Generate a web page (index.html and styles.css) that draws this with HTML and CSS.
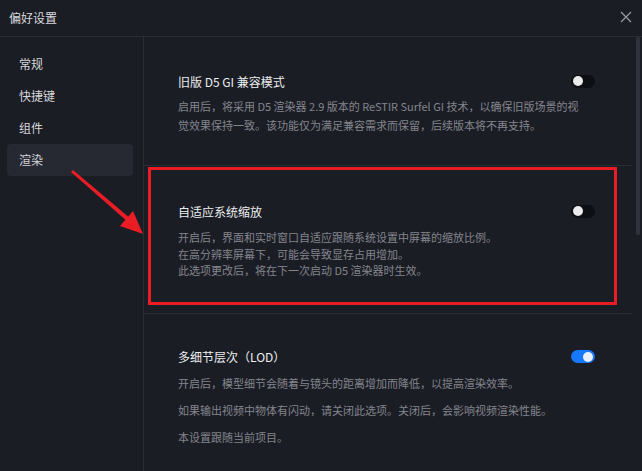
FILE: index.html
```html
<html>
<head>
  <meta charset="utf-8">
  <link rel="stylesheet" href="styles.css">
</head>
<body>
  <div class="dialog">
    <div class="header">
      <span class="header-title">偏好设置</span>
      <svg class="close" width="12" height="12" viewBox="0 0 12 12">
        <path d="M1 1 L11 11 M11 1 L1 11" stroke="#9a9ca3" stroke-width="1.2" fill="none"/>
      </svg>
    </div>

    <div class="body">
      <div class="sidebar">
        <div class="nav-item">常规</div>
        <div class="nav-item">快捷键</div>
        <div class="nav-item">组件</div>
        <div class="nav-item active">渲染</div>
      </div>

      <div class="content">
        <div class="sections">
          <div class="section first">
            <div class="row">
              <div class="title">旧版 D5 GI 兼容模式</div>
              <div class="toggle"><div class="knob"></div></div>
            </div>
            <div class="desc wide">启用后，将采用 D5 渲染器 2.9 版本的 ReSTIR Surfel GI 技术，以确保旧版场景的视觉效果保持一致。该功能仅为满足兼容需求而保留，后续版本将不再支持。</div>
          </div>

          <div class="section second">
            <div class="highlight"></div>
            <div class="row">
              <div class="title">自适应系统缩放</div>
              <div class="toggle"><div class="knob"></div></div>
            </div>
            <div class="desc">开启后，界面和实时窗口自适应跟随系统设置中屏幕的缩放比例。<br>在高分辨率屏幕下，可能会导致显存占用增加。<br>此选项更改后，将在下一次启动 D5 渲染器时生效。</div>
          </div>

          <div class="section third">
            <div class="row">
              <div class="title">多细节层次（LOD）</div>
              <div class="toggle on"><div class="knob"></div></div>
            </div>
            <p class="para">开启后，模型细节会随着与镜头的距离增加而降低，以提高渲染效率。</p>
            <p class="para">如果输出视频中物体有闪动，请关闭此选项。关闭后，会影响视频渲染性能。</p>
            <p class="para">本设置跟随当前项目。</p>
          </div>
        </div>
        <div class="scroll-track"><div class="scroll-thumb"></div></div>
      </div>
    </div>

    <svg class="arrow" width="642" height="471" viewBox="0 0 642 471">
      <polygon points="71,172 73,170 131,219 128,222" fill="#ec1c24"/>
      <polygon points="143,234 133,211 120,226" fill="#ec1c24"/>
    </svg>
  </div>
</body>
</html>
```

FILE: styles.css
```css
body {
  margin: 0;
  background-color: #1b1d25;
  font-family: "Noto Sans CJK SC", "Noto Sans", sans-serif;
  overflow: hidden;
}

.dialog {
  position: relative;
  width: 642px;
  height: 471px;
  overflow: hidden;
  background-color: #1b1d25;
}

.header {
  height: 36px;
  display: flex;
  align-items: center;
  justify-content: space-between;
  padding: 0 10px 0 9px;
  border-bottom: 1px solid #2a2d35;
}

.header-title {
  font-size: 12px;
  color: #d9dadd;
  margin-top: -2px;
}

.close {
  margin-top: -3px;
}

.body {
  display: flex;
  height: 434px;
}

.sidebar {
  width: 126px;
  padding: 11px 10px 0 7px;
  border-right: 1px solid #2a2d35;
}

.nav-item {
  height: 32px;
  line-height: 32px;
  padding-left: 12px;
  font-size: 12px;
  color: #d6d7da;
  border-radius: 4px;
}

.nav-item.active {
  background-color: #262932;
}

.content {
  flex: 1;
  display: flex;
}

.sections {
  flex: 1;
}

.section {
  position: relative;
  padding: 0 37px 0 34px;
  border-bottom: 1px solid #2a2d35;
}

.section.first {
  padding-top: 35px;
  padding-bottom: 30px;
}

.section.second {
  padding-top: 36px;
  padding-bottom: 34px;
}

.section.third {
  padding-top: 34px;
  border-bottom: none;
}

.row {
  display: flex;
  align-items: center;
  justify-content: space-between;
  height: 18px;
}

.title {
  font-size: 12px;
  color: #eceef0;
}

.toggle {
  width: 24px;
  height: 13px;
  border-radius: 7px;
  background-color: #0e0f14;
  position: relative;
}

.knob {
  position: absolute;
  left: 2px;
  top: 1.5px;
  width: 10px;
  height: 10px;
  border-radius: 50%;
  background-color: #ebebeb;
}

.toggle.on {
  background-color: #1677ff;
}

.toggle.on .knob {
  left: auto;
  right: 2px;
  background-color: #e8f0ff;
}

.desc {
  margin-top: 9px;
  font-size: 11px;
  line-height: 16.5px;
  color: #83858c;
}

.desc.wide {
  margin-top: 7px;
  line-height: 19px;
  padding-right: 12px;
}

.para {
  margin: 9px 0 0 0;
  font-size: 11px;
  line-height: 16.5px;
  color: #83858c;
}

.para + .para {
  margin-top: 10.5px;
}

.highlight {
  position: absolute;
  left: 4px;
  top: 1px;
  width: 463px;
  height: 132px;
  border: 3px solid #ec1c24;
}

.scroll-track {
  width: 10px;
}

.scroll-thumb {
  width: 4px;
  height: 198px;
  margin-left: 4px;
  border-radius: 2px;
  background-color: #30333b;
}

.arrow {
  position: absolute;
  left: 0;
  top: 0;
  pointer-events: none;
}
```
